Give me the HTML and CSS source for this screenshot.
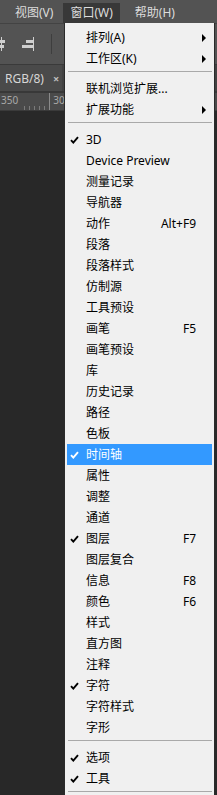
FILE: index.html
```html
<!DOCTYPE html>
<html lang="zh-CN">
<head>
<meta charset="utf-8">
<link rel="stylesheet" href="styles.css">
</head>
<body>
<div class="app">
  <div class="menubar">
    <span class="mb-item first">视图(V)</span>
    <span class="mb-item active">窗口(W)</span>
    <span class="mb-item">帮助(H)</span>
  </div>
  <div class="toolbar">
    <svg class="tool t1" width="12" height="14" viewBox="0 0 12 14"><rect x="5" y="0" width="1" height="14" fill="#cfcfcf"/><rect x="0" y="3" width="9" height="3" fill="#cfcfcf"/><rect x="1" y="8" width="7" height="3" fill="#cfcfcf"/></svg>
    <svg class="tool t2" width="14" height="14" viewBox="0 0 14 14"><rect x="12" y="0" width="1" height="14" fill="#cfcfcf"/><rect x="5" y="3" width="7" height="3" fill="#cfcfcf"/><rect x="1" y="8" width="11" height="3" fill="#cfcfcf"/></svg>
    <span class="tsep"></span>
  </div>
  <div class="tabrow">
    <div class="tab"><span class="tab-title">RGB/8)</span><span class="tab-x">×</span></div>
  </div>
  <div class="ruler">
    <span class="rnum r1">350</span>
    <span class="rtick"></span>
    <span class="rmajor"></span>
    <span class="rnum r2">300</span>
  </div>
  <div class="canvas"></div>

  <div class="menu">
    <div class="mi"><span class="ck"></span><span class="lb">排列(A)</span><span class="sc"></span><span class="ar"><i class="tri"></i></span></div>
    <div class="mi"><span class="ck"></span><span class="lb">工作区(K)</span><span class="sc"></span><span class="ar"><i class="tri"></i></span></div>
    <div class="sep"></div>
    <div class="mi"><span class="ck"></span><span class="lb">联机浏览扩展...</span><span class="sc"></span><span class="ar"></span></div>
    <div class="mi"><span class="ck"></span><span class="lb">扩展功能</span><span class="sc"></span><span class="ar"><i class="tri"></i></span></div>
    <div class="sep"></div>
    <div class="mi"><span class="ck"><svg width="9" height="8" viewBox="0 0 9 8"><path d="M1 4.2 L3.3 6.6 L8 1.2" fill="none" stroke="#000" stroke-width="1.9"/></svg></span><span class="lb">3D</span><span class="sc"></span><span class="ar"></span></div>
    <div class="mi"><span class="ck"></span><span class="lb">Device Preview</span><span class="sc"></span><span class="ar"></span></div>
    <div class="mi"><span class="ck"></span><span class="lb">测量记录</span><span class="sc"></span><span class="ar"></span></div>
    <div class="mi"><span class="ck"></span><span class="lb">导航器</span><span class="sc"></span><span class="ar"></span></div>
    <div class="mi"><span class="ck"></span><span class="lb">动作</span><span class="sc">Alt+F9</span><span class="ar"></span></div>
    <div class="mi"><span class="ck"></span><span class="lb">段落</span><span class="sc"></span><span class="ar"></span></div>
    <div class="mi"><span class="ck"></span><span class="lb">段落样式</span><span class="sc"></span><span class="ar"></span></div>
    <div class="mi"><span class="ck"></span><span class="lb">仿制源</span><span class="sc"></span><span class="ar"></span></div>
    <div class="mi"><span class="ck"></span><span class="lb">工具预设</span><span class="sc"></span><span class="ar"></span></div>
    <div class="mi"><span class="ck"></span><span class="lb">画笔</span><span class="sc">F5</span><span class="ar"></span></div>
    <div class="mi"><span class="ck"></span><span class="lb">画笔预设</span><span class="sc"></span><span class="ar"></span></div>
    <div class="mi"><span class="ck"></span><span class="lb">库</span><span class="sc"></span><span class="ar"></span></div>
    <div class="mi"><span class="ck"></span><span class="lb">历史记录</span><span class="sc"></span><span class="ar"></span></div>
    <div class="mi"><span class="ck"></span><span class="lb">路径</span><span class="sc"></span><span class="ar"></span></div>
    <div class="mi"><span class="ck"></span><span class="lb">色板</span><span class="sc"></span><span class="ar"></span></div>
    <div class="mi hl"><span class="ck"><svg width="9" height="8" viewBox="0 0 9 8"><path d="M1 4.2 L3.3 6.6 L8 1.2" fill="none" stroke="#fff" stroke-width="1.9"/></svg></span><span class="lb">时间轴</span><span class="sc"></span><span class="ar"></span></div>
    <div class="mi"><span class="ck"></span><span class="lb">属性</span><span class="sc"></span><span class="ar"></span></div>
    <div class="mi"><span class="ck"></span><span class="lb">调整</span><span class="sc"></span><span class="ar"></span></div>
    <div class="mi"><span class="ck"></span><span class="lb">通道</span><span class="sc"></span><span class="ar"></span></div>
    <div class="mi"><span class="ck"><svg width="9" height="8" viewBox="0 0 9 8"><path d="M1 4.2 L3.3 6.6 L8 1.2" fill="none" stroke="#000" stroke-width="1.9"/></svg></span><span class="lb">图层</span><span class="sc">F7</span><span class="ar"></span></div>
    <div class="mi"><span class="ck"></span><span class="lb">图层复合</span><span class="sc"></span><span class="ar"></span></div>
    <div class="mi"><span class="ck"></span><span class="lb">信息</span><span class="sc">F8</span><span class="ar"></span></div>
    <div class="mi"><span class="ck"></span><span class="lb">颜色</span><span class="sc">F6</span><span class="ar"></span></div>
    <div class="mi"><span class="ck"></span><span class="lb">样式</span><span class="sc"></span><span class="ar"></span></div>
    <div class="mi"><span class="ck"></span><span class="lb">直方图</span><span class="sc"></span><span class="ar"></span></div>
    <div class="mi"><span class="ck"></span><span class="lb">注释</span><span class="sc"></span><span class="ar"></span></div>
    <div class="mi"><span class="ck"><svg width="9" height="8" viewBox="0 0 9 8"><path d="M1 4.2 L3.3 6.6 L8 1.2" fill="none" stroke="#000" stroke-width="1.9"/></svg></span><span class="lb">字符</span><span class="sc"></span><span class="ar"></span></div>
    <div class="mi"><span class="ck"></span><span class="lb">字符样式</span><span class="sc"></span><span class="ar"></span></div>
    <div class="mi"><span class="ck"></span><span class="lb">字形</span><span class="sc"></span><span class="ar"></span></div>
    <div class="sep"></div>
    <div class="mi"><span class="ck"><svg width="9" height="8" viewBox="0 0 9 8"><path d="M1 4.2 L3.3 6.6 L8 1.2" fill="none" stroke="#000" stroke-width="1.9"/></svg></span><span class="lb">选项</span><span class="sc"></span><span class="ar"></span></div>
    <div class="mi"><span class="ck"><svg width="9" height="8" viewBox="0 0 9 8"><path d="M1 4.2 L3.3 6.6 L8 1.2" fill="none" stroke="#000" stroke-width="1.9"/></svg></span><span class="lb">工具</span><span class="sc"></span><span class="ar"></span></div>
    <div class="sep"></div>
  </div>
</div>
</body>
</html>
```

FILE: styles.css
```css
html, body {
  margin: 0;
  padding: 0;
  background: #282828;
}
body {
  width: 217px;
  height: 795px;
  overflow: hidden;
  font-family: "Noto Sans", "Noto Sans CJK SC", sans-serif;
  font-size: 12px;
}
.app {
  position: relative;
  width: 217px;
  height: 795px;
  display: flex;
  flex-direction: column;
}
.menubar {
  height: 23px;
  background: #535353;
  display: flex;
  align-items: flex-end;
  color: #dcdcdc;
  padding-left: 15px;
  box-sizing: border-box;
}
.mb-item {
  height: 20px;
  line-height: 19px;
  white-space: nowrap;
  margin-left: 8px;
  padding: 0 7px;
}
.mb-item.first {
  margin-left: 0;
  padding: 0 2px 0 0;
}
.mb-item.active {
  background: #383838;
}
.toolbar {
  height: 40px;
  background: #535353;
  border-top: 1px solid #434343;
  border-bottom: 1px solid #3a3a3a;
  display: flex;
  align-items: center;
}
.tool.t1 { margin-left: -4px; }
.tool.t2 { margin-left: 13px; }
.tsep {
  width: 1px;
  height: 20px;
  background: #3e3e3e;
  margin-left: 16px;
}
.tabrow {
  height: 26px;
  background: #424242;
  border-bottom: 2px solid #383838;
  display: flex;
}
.tab {
  display: flex;
  align-items: center;
  width: 62px;
  background: #4a4a4a;
}
.tab-title {
  color: #d6d6d6;
  margin-left: 5px;
  font-size: 12px;
}
.tab-x {
  color: #bcbcbc;
  margin-left: 9px;
  font-weight: bold;
  font-size: 11px;
}
.ruler {
  position: relative;
  height: 17px;
  background: #4a4a4a;
  border-bottom: 1px solid #3a3a3a;
  display: flex;
  align-items: flex-start;
  overflow: hidden;
}
.rnum {
  color: #a8a8a8;
  font-size: 10px;
  line-height: 12px;
  margin-top: 1px;
}
.r1 { margin-left: 1px; }
.rtick {
  width: 28px;
  height: 17px;
  margin-left: 2px;
  background: repeating-linear-gradient(to right, transparent 0 4px, #7a7a7a 4px 5px);
  -webkit-mask: linear-gradient(to bottom, transparent 0 13px, #000 13px);
          mask: linear-gradient(to bottom, transparent 0 13px, #000 13px);
}
.rmajor {
  width: 1px;
  height: 17px;
  background: #8a8a8a;
  margin-left: 1px;
}
.r2 { margin-left: 3px; }
.canvas {
  flex: 1;
  background: #282828;
}

/* dropdown menu */
.menu {
  position: absolute;
  left: 64px;
  top: 23px;
  width: 151px;
  box-sizing: border-box;
  background: #f0f0f0;
  border-left: 1px solid #2a2a2a;
  border-right: 1px solid #2a2a2a;
  padding-top: 4px;
  color: #000;
}
.mi {
  display: flex;
  align-items: center;
  height: 21px;
  line-height: 21px;
  margin: 0 2px;
  white-space: nowrap;
}
.mi.hl {
  background: #3399ff;
  color: #fff;
}
.ck {
  width: 19px;
  height: 21px;
  display: flex;
  align-items: center;
  padding-left: 3px;
  box-sizing: border-box;
}
.lb {
  flex: 1;
}
.sc {
  text-align: right;
}
.ar {
  width: 16px;
  height: 21px;
  display: flex;
  align-items: center;
}
.tri {
  width: 0;
  height: 0;
  margin-left: 6px;
  border-top: 4px solid transparent;
  border-bottom: 4px solid transparent;
  border-left: 4px solid #000;
}
.sep {
  height: 9px;
  padding-top: 2px;
  box-sizing: border-box;
  margin: 0 2px 0 3px;
}
.sep::before {
  content: "";
  display: block;
  height: 1px;
  background: #a9a9a9;
}
```
